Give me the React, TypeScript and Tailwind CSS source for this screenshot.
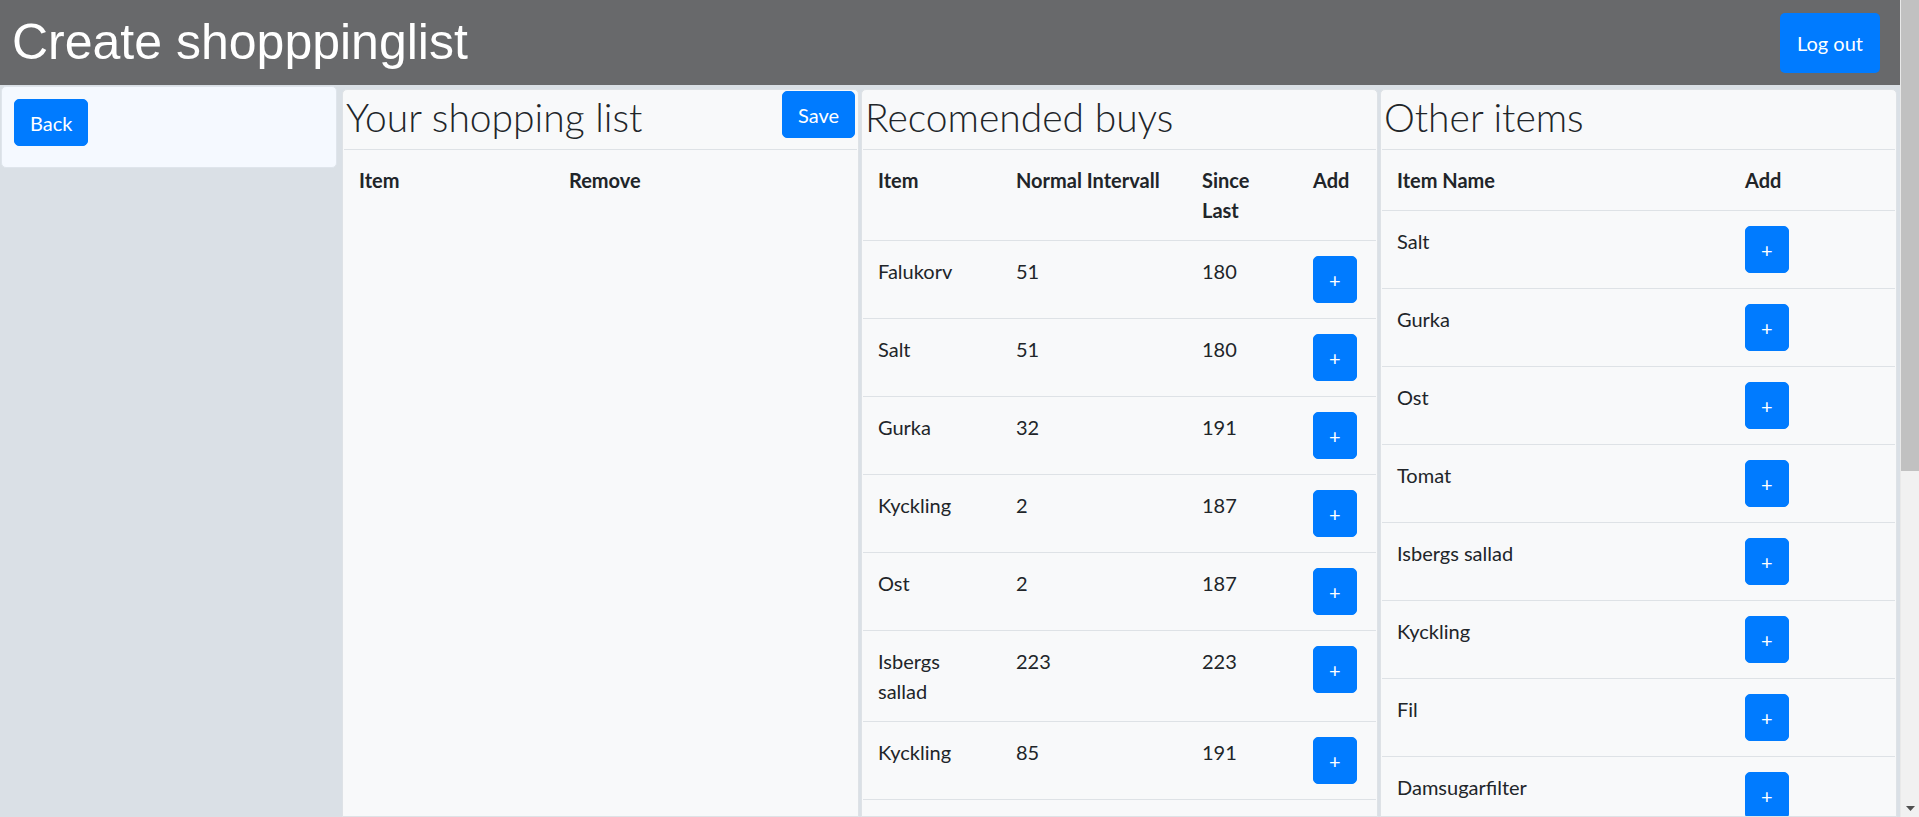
import React from 'react';

type RecRow = { name: string; interval: number; since: number };

const recommended: RecRow[] = [
  { name: 'Falukorv', interval: 51, since: 180 },
  { name: 'Salt', interval: 51, since: 180 },
  { name: 'Gurka', interval: 32, since: 191 },
  { name: 'Kyckling', interval: 2, since: 187 },
  { name: 'Ost', interval: 2, since: 187 },
  { name: 'Isbergs sallad', interval: 223, since: 223 },
  { name: 'Kyckling', interval: 85, since: 191 },
];

const otherItems = ['Salt', 'Gurka', 'Ost', 'Tomat', 'Isbergs sallad', 'Kyckling', 'Fil', 'Damsugarfilter'];

const thClass = 'border-t border-[#dee2e6] p-[15px] text-left align-top font-bold leading-[30px]';
const tdClass = 'border-t border-[#dee2e6] p-[15px] align-top leading-[30px]';
const btnClass =
  'rounded-[5px] border border-[#007bff] bg-[#007bff] px-[15px] py-[7.5px] text-[20px] leading-[30px] text-white';

function AddButton() {
  return <button type="button" className={btnClass}>+</button>;
}

function Column({ title, action, children }: { title: string; action?: React.ReactNode; children: React.ReactNode }) {
  return (
    <section className="flex w-[517px] shrink-0 flex-col overflow-hidden rounded-t-[5px] border border-[#dee2e6] bg-[#f8f9fa] px-px">
      {/* title row */}
      <div className="flex h-[59px] shrink-0 items-start justify-between">
        <h2 className="mt-[3px] pl-[2px] text-[39px] font-light leading-[48px]">{title}</h2>
        {action && <div className="mr-[2px] mt-px">{action}</div>}
      </div>
      {children}
    </section>
  );
}

export default function App() {
  return (
    <div className="flex h-screen overflow-hidden bg-[#dae0e6] font-['Lato','Segoe_UI',sans-serif] text-[20px] text-[#212529]">
      <div className="flex min-w-0 flex-1 flex-col">
        <header className="flex h-[85px] shrink-0 items-stretch justify-between bg-[#68696b] py-3 pl-3 pr-5">
          <h1 className="font-['Liberation_Sans',Arial,sans-serif] text-[50px] font-normal leading-[60px] text-white">
            Create shopppinglist
          </h1>
          <button type="button" className="mt-px w-[100px] rounded-[5px] bg-[#007bff] text-[20px] text-white">
            Log out
          </button>
        </header>

        <div className="flex min-h-0 flex-1 items-start pl-px">
          {/* left panel */}
          <aside className="mt-px w-[336px] shrink-0 rounded-[5px] border border-[#dfe5ec] bg-[#f5f9ff] px-3 pb-[21px] pt-3">
            <button type="button" className={btnClass}>Back</button>
          </aside>

          <div className="ml-[5px] mt-1 flex gap-[2px] self-stretch">
            <Column
              title="Your shopping list"
              action={<button type="button" className={btnClass}>Save</button>}
            >
              <table className="w-full table-fixed border-collapse">
                <colgroup>
                  <col className="w-[210px]" />
                  <col />
                </colgroup>
                <thead>
                  <tr>
                    <th className={thClass}>Item</th>
                    <th className={thClass}>Remove</th>
                  </tr>
                </thead>
                <tbody />
              </table>
            </Column>

            <Column title="Recomended buys">
              <table className="w-full table-fixed border-collapse">
                <colgroup>
                  <col className="w-[138px]" />
                  <col className="w-[186px]" />
                  <col className="w-[111px]" />
                  <col />
                </colgroup>
                <thead>
                  <tr>
                    <th className={thClass}>Item</th>
                    <th className={thClass}>Normal Intervall</th>
                    <th className={thClass}>Since Last</th>
                    <th className={thClass}>Add</th>
                  </tr>
                </thead>
                <tbody>
                  {recommended.map((r, i) => (
                    <tr key={i}>
                      <td className={tdClass}>{r.name}</td>
                      <td className={tdClass}>{r.interval}</td>
                      <td className={tdClass}>{r.since}</td>
                      <td className={tdClass}><AddButton /></td>
                    </tr>
                  ))}
                  <tr>
                    <td className="border-t border-[#dee2e6]" colSpan={4} />
                  </tr>
                </tbody>
              </table>
            </Column>

            <Column title="Other items">
              <table className="w-full table-fixed border-collapse">
                <colgroup>
                  <col className="w-[348px]" />
                  <col />
                </colgroup>
                <thead>
                  <tr>
                    <th className={thClass}>Item Name</th>
                    <th className={thClass}>Add</th>
                  </tr>
                </thead>
                <tbody>
                  {otherItems.map((name, i) => (
                    <tr key={i}>
                      <td className={tdClass}>{name}</td>
                      <td className={tdClass}><AddButton /></td>
                    </tr>
                  ))}
                </tbody>
              </table>
            </Column>
          </div>
        </div>
      </div>

      {/* scrollbar */}
      <div className="flex w-[19px] shrink-0 flex-col border-l border-[#e9e9e9] bg-[#f1f1f1]">
        <div className="h-[471px] bg-[#c1c1c1]" />
        <div className="flex-1" />
        <div className="flex h-[17px] items-center justify-center">
          <svg width="9" height="5" viewBox="0 0 9 5">
            <path d="M0 0h9L4.5 5z" fill="#505050" />
          </svg>
        </div>
      </div>
    </div>
  );
}
